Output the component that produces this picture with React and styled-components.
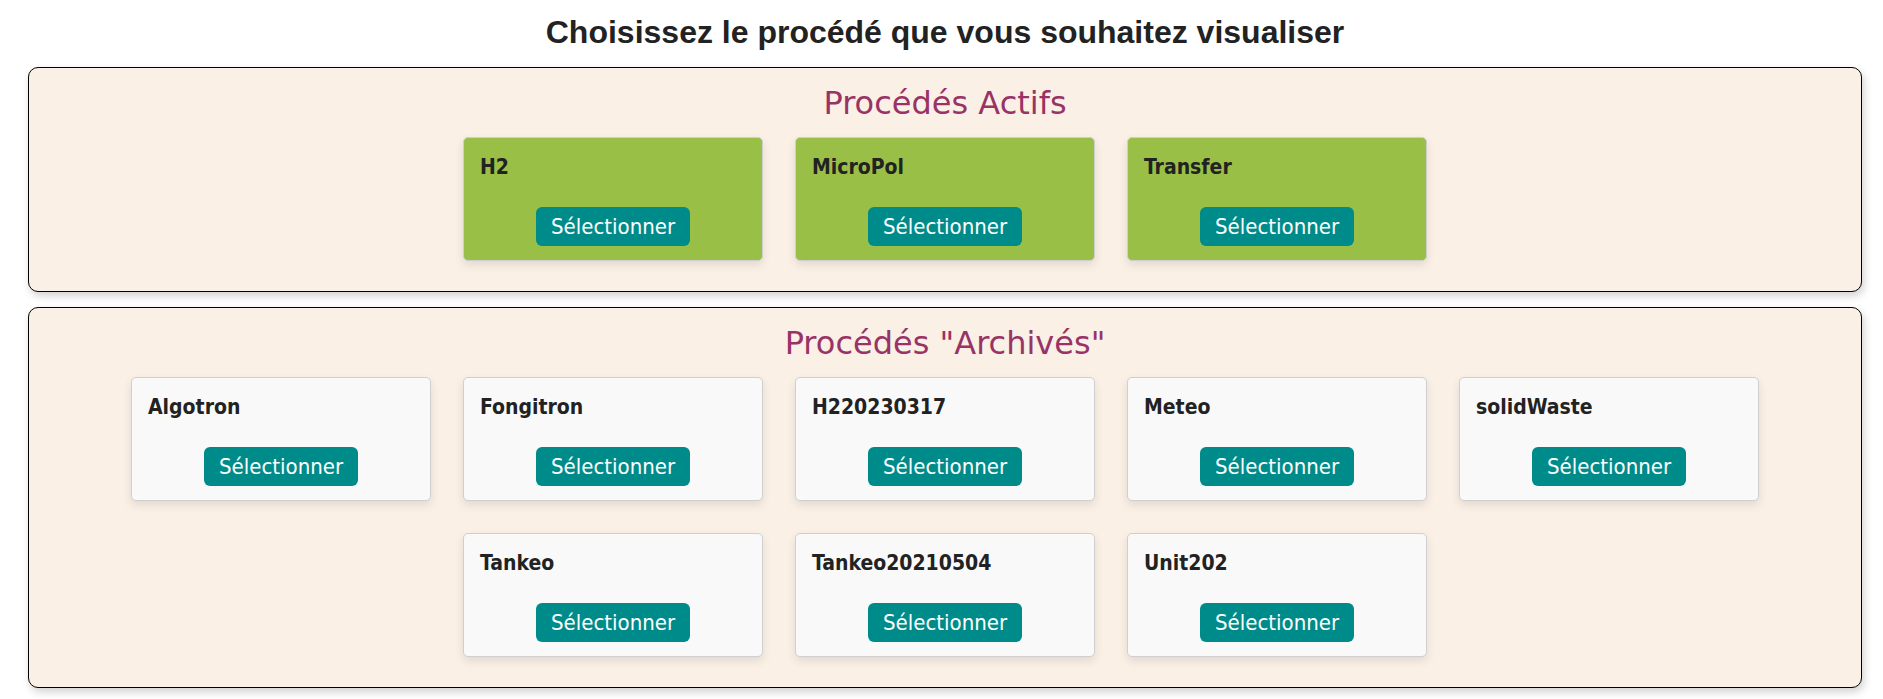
import React from 'react';
import styled, { createGlobalStyle } from 'styled-components';

const GlobalStyle = createGlobalStyle`
  body {
    margin: 0;
    background: #ffffff;
    font-family: "DejaVu Sans", Verdana, sans-serif;
    color: #222222;
  }
`;

const StyledPage = styled.div`
  padding: 0 21px 0 28px;
`;

const StyledTitle = styled.h1`
  margin: 0;
  padding: 14px 0 16px;
  text-align: center;
  font-family: "Liberation Sans", Arial, sans-serif;
  font-size: 32px;
  font-weight: bold;
  color: #222222;
`;

const StyledSection = styled.section`
  background: #faf0e6;
  border: 1px solid #000000;
  border-radius: 10px;
  box-shadow: 2px 4px 8px rgba(0, 0, 0, 0.18);
  padding: 17px 17px 14px;
  margin-bottom: 15px;
`;

const StyledSectionTitle = styled.h2`
  margin: 0;
  text-align: center;
  font-family: "DejaVu Sans", Verdana, sans-serif;
  font-size: 32px;
  font-weight: normal;
  line-height: 36px;
  color: #993366;
`;

const StyledGrid = styled.div`
  display: flex;
  flex-wrap: wrap;
  justify-content: center;
`;

const StyledCard = styled.div`
  width: 300px;
  box-sizing: border-box;
  margin: 16px;
  padding: 17px 15px 14px 16px;
  background: ${({ active }) => (active ? '#9abf46' : '#f9f9f9')};
  border: 1px solid #cfcfcf;
  border-radius: 5px;
  box-shadow: 0 4px 10px rgba(0, 0, 0, 0.1);
  display: flex;
  flex-direction: column;
  font-family: "DejaVu Sans Condensed", "DejaVu Sans", Tahoma, sans-serif;
  font-stretch: condensed;
`;

const StyledName = styled.h3`
  margin: 0 0 27px;
  font-size: 21px;
  line-height: 25px;
  font-weight: bold;
  color: #222222;
`;

const StyledButton = styled.button`
  align-self: center;
  margin-right: 1px;
  padding: 7px 15px;
  border: none;
  border-radius: 6px;
  background: #008b8b;
  color: #ffffff;
  font-family: inherit;
  font-stretch: condensed;
  font-size: 22px;
  line-height: 25px;
  cursor: pointer;
`;

const actifs = ['H2', 'MicroPol', 'Transfer'];
const archives = [
  'Algotron',
  'Fongitron',
  'H220230317',
  'Meteo',
  'solidWaste',
  'Tankeo',
  'Tankeo20210504',
  'Unit202',
];

const ProcessCard = ({ name, active }) => (
  <StyledCard active={active}>
    <StyledName>{name}</StyledName>
    <StyledButton>Sélectionner</StyledButton>
  </StyledCard>
);

const App = () => (
  <StyledPage>
    <GlobalStyle />
    <StyledTitle>Choisissez le procédé que vous souhaitez visualiser</StyledTitle>
    <StyledSection>
      <StyledSectionTitle>Procédés Actifs</StyledSectionTitle>
      <StyledGrid>
        {actifs.map(name => (
          <ProcessCard key={name} name={name} active />
        ))}
      </StyledGrid>
    </StyledSection>
    <StyledSection>
      <StyledSectionTitle>Procédés "Archivés"</StyledSectionTitle>
      <StyledGrid>
        {archives.map(name => (
          <ProcessCard key={name} name={name} />
        ))}
      </StyledGrid>
    </StyledSection>
  </StyledPage>
);

export default App;
